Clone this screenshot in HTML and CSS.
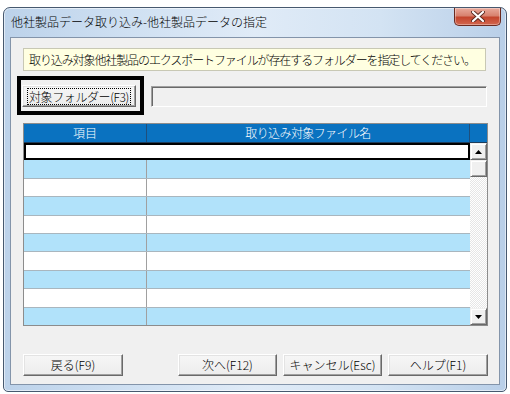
FILE: index.html
```html
<!DOCTYPE html>
<html lang="ja">
<head>
    <meta charset="UTF-8">
    <title>他社製品データ取り込み-他社製品データの指定</title>
    <link rel="stylesheet" href="styles.css">
</head>
<body>
<div class="window">
    <div class="titlebar">
        <span class="title">他社製品データ取り込み-他社製品データの指定</span>
        <button class="close" type="button">
            <svg width="14" height="11" viewBox="0 0 14 11">
                <path d="M2 1 L12 10 M12 1 L2 10" stroke="#5a2a22" stroke-width="4" stroke-linecap="round"/>
                <path d="M2 1 L12 10 M12 1 L2 10" stroke="#fff" stroke-width="2.2" stroke-linecap="round"/>
            </svg>
        </button>
    </div>

    <div class="client">
        <div class="message">取り込み対象他社製品のエクスポートファイルが存在するフォルダーを指定してください。</div>

        <div class="folder-row">
            <div class="focus-box">
                <button class="btn folder-btn" type="button"><span class="dotted">対象フォルダー(F3)</span></button>
            </div>
            <div class="path-field"></div>
        </div>

        <div class="grid">
            <div class="grid-head">
                <div class="col-item">項目</div>
                <div class="col-file">取り込み対象ファイル名</div>
                <div class="col-pad"></div>
            </div>
            <div class="grid-body">
                <div class="rows">
                    <div class="row selected"><div class="cell-item"></div><div class="cell-file"></div></div>
                    <div class="row alt"><div class="cell-item"></div><div class="cell-file"></div></div>
                    <div class="row"><div class="cell-item"></div><div class="cell-file"></div></div>
                    <div class="row alt"><div class="cell-item"></div><div class="cell-file"></div></div>
                    <div class="row"><div class="cell-item"></div><div class="cell-file"></div></div>
                    <div class="row alt"><div class="cell-item"></div><div class="cell-file"></div></div>
                    <div class="row"><div class="cell-item"></div><div class="cell-file"></div></div>
                    <div class="row alt"><div class="cell-item"></div><div class="cell-file"></div></div>
                    <div class="row"><div class="cell-item"></div><div class="cell-file"></div></div>
                    <div class="row alt"><div class="cell-item"></div><div class="cell-file"></div></div>
                </div>
                <div class="vscroll">
                    <div class="sb-btn">
                        <svg width="7" height="4" viewBox="0 0 7 4"><path d="M3.5 0 L7 4 L0 4 Z" fill="#000"/></svg>
                    </div>
                    <div class="sb-thumb"></div>
                    <div class="sb-track"></div>
                    <div class="sb-btn">
                        <svg width="7" height="4" viewBox="0 0 7 4"><path d="M0 0 L7 0 L3.5 4 Z" fill="#000"/></svg>
                    </div>
                </div>
            </div>
        </div>

        <div class="actions">
            <button class="btn" type="button">戻る(F9)</button>
            <div class="actions-right">
                <button class="btn" type="button">次へ(F12)</button>
                <button class="btn" type="button">キャンセル(Esc)</button>
                <button class="btn" type="button">ヘルプ(F1)</button>
            </div>
        </div>
    </div>
</div>
</body>
</html>
```

FILE: styles.css
```css
body {
    margin: 7px 0 0 3px;
    background: #fff;
    font-family: "Noto Sans CJK JP", "Noto Sans", sans-serif;
    font-size: 12px;
    font-weight: 300;
    color: #000;
}

button {
    font-family: inherit;
    font-size: 12px;
    font-weight: 300;
    color: #000;
}

.window {
    width: 504px;
    height: 385px;
    box-sizing: border-box;
    border: 1px solid #47596f;
    border-radius: 7px 7px 5px 5px;
    padding: 0 6px 6px 6px;
    display: flex;
    flex-direction: column;
    background: linear-gradient(to right, #bcd2ea 0%, #cfe0f2 25%, #e0ebf7 50%, #d3e3f3 75%, #b9cfe8 100%);
    box-shadow: inset 0 0 0 1px rgba(255, 255, 255, 0.55);
}

.titlebar {
    height: 29px;
    display: flex;
    align-items: flex-start;
    justify-content: space-between;
}

.title {
    margin: 6px 0 0 1px;
    line-height: 15px;
    color: #000;
}

.close {
    width: 47px;
    height: 18px;
    margin-right: -1px;
    padding: 0;
    border: 1px solid #6a2a20;
    border-top: none;
    border-radius: 0 0 5px 5px;
    background: linear-gradient(to bottom, #e9a99b 0%, #d8826f 45%, #c4452d 55%, #d2674f 100%);
    box-shadow: inset 0 0 0 1px rgba(255, 255, 255, 0.35);
    display: flex;
    align-items: center;
    justify-content: center;
}

.client {
    flex: 1;
    background: #f0f0f0;
    border: 1px solid #8394aa;
    padding: 10px 11px 0 12px;
    display: flex;
    flex-direction: column;
}

.message {
    width: 463px;
    height: 23px;
    box-sizing: border-box;
    border: 1px solid #c8c8b4;
    background: #ffffe1;
    padding-left: 5px;
    line-height: 21px;
    letter-spacing: -1.1px;
    white-space: nowrap;
}

.folder-row {
    display: flex;
    align-items: center;
    margin-top: 5px;
}

.focus-box {
    width: 127px;
    height: 39px;
    box-sizing: border-box;
    border: 4px solid #000;
    margin-left: -6px;
    padding: 1px 0 0 1px;
    display: flex;
    align-items: center;
}

.btn {
    height: 22px;
    width: 100px;
    padding: 0;
    border: 1px solid;
    border-color: #fff #696969 #696969 #fff;
    box-shadow: inset -1px -1px 0 #a0a0a0, inset 1px 1px 0 #e3e3e3;
    background: linear-gradient(to bottom, #f6f6f6, #ececec);
    line-height: 18px;
    white-space: nowrap;
}

.folder-btn {
    width: 114px;
    overflow: visible;
    display: flex;
    align-items: center;
    justify-content: center;
}

.dotted {
    display: inline-block;
    outline: 1px dotted #000;
    outline-offset: 0;
    padding: 0 1px;
    line-height: 15px;
    letter-spacing: -0.4px;
}

.path-field {
    width: 336px;
    height: 21px;
    box-sizing: border-box;
    margin-left: 7px;
    margin-top: 2px;
    border: 1px solid;
    border-color: #a0a0a0 #fff #fff #a0a0a0;
    box-shadow: inset 1px 1px 0 #696969;
    background: #f0f0f0;
}

.grid {
    width: 465px;
    height: 203px;
    box-sizing: border-box;
    margin-top: 8px;
    border: 1px solid #8c8c8c;
    display: flex;
    flex-direction: column;
    background: #fff;
}

.grid-head {
    height: 18px;
    display: flex;
    background: #0a72c0;
    color: #fff;
    line-height: 17px;
    text-align: center;
    border-bottom: 1px solid #1d3c5a;
}

.col-item {
    width: 122px;
    border-right: 1px solid #1f4f7c;
}

.col-file {
    flex: 1;
    border-right: 1px solid #1f4f7c;
    letter-spacing: -0.6px;
}

.col-pad {
    width: 17px;
}

.grid-body {
    flex: 1;
    display: flex;
}

.rows {
    flex: 1;
    display: flex;
    flex-direction: column;
}

.row {
    flex: 1;
    display: flex;
    box-sizing: border-box;
    border-bottom: 1px solid #a9b6be;
    background: #fff;
}

.row.alt {
    background: #b1e2fa;
}

.row:last-child {
    border-bottom: none;
}

.row.selected {
    box-shadow: inset 0 0 0 2px #000;
    border-bottom: none;
}

.cell-item {
    width: 122px;
    border-right: 1px solid #a0a0a0;
}

.row.selected .cell-item {
    border-right: none;
}

.cell-file {
    flex: 1;
}

.vscroll {
    width: 17px;
    display: flex;
    flex-direction: column;
}

.sb-btn,
.sb-thumb {
    height: 17px;
    box-sizing: border-box;
    border: 1px solid;
    border-color: #f0f0f0 #696969 #696969 #f0f0f0;
    box-shadow: inset 1px 1px 0 #fff, inset -1px -1px 0 #a0a0a0;
    background: #f0f0f0;
    display: flex;
    align-items: center;
    justify-content: center;
}

.sb-track {
    flex: 1;
    background: repeating-conic-gradient(#fff 0 25%, #e6e6e6 0 50%) 0 0 / 2px 2px;
}

.actions {
    display: flex;
    justify-content: space-between;
    margin-top: 28px;
}

.actions-right {
    display: flex;
    gap: 6px;
}

.actions-right .btn {
    width: 99px;
}

.actions-right .btn:last-child {
    width: 100px;
}
```
